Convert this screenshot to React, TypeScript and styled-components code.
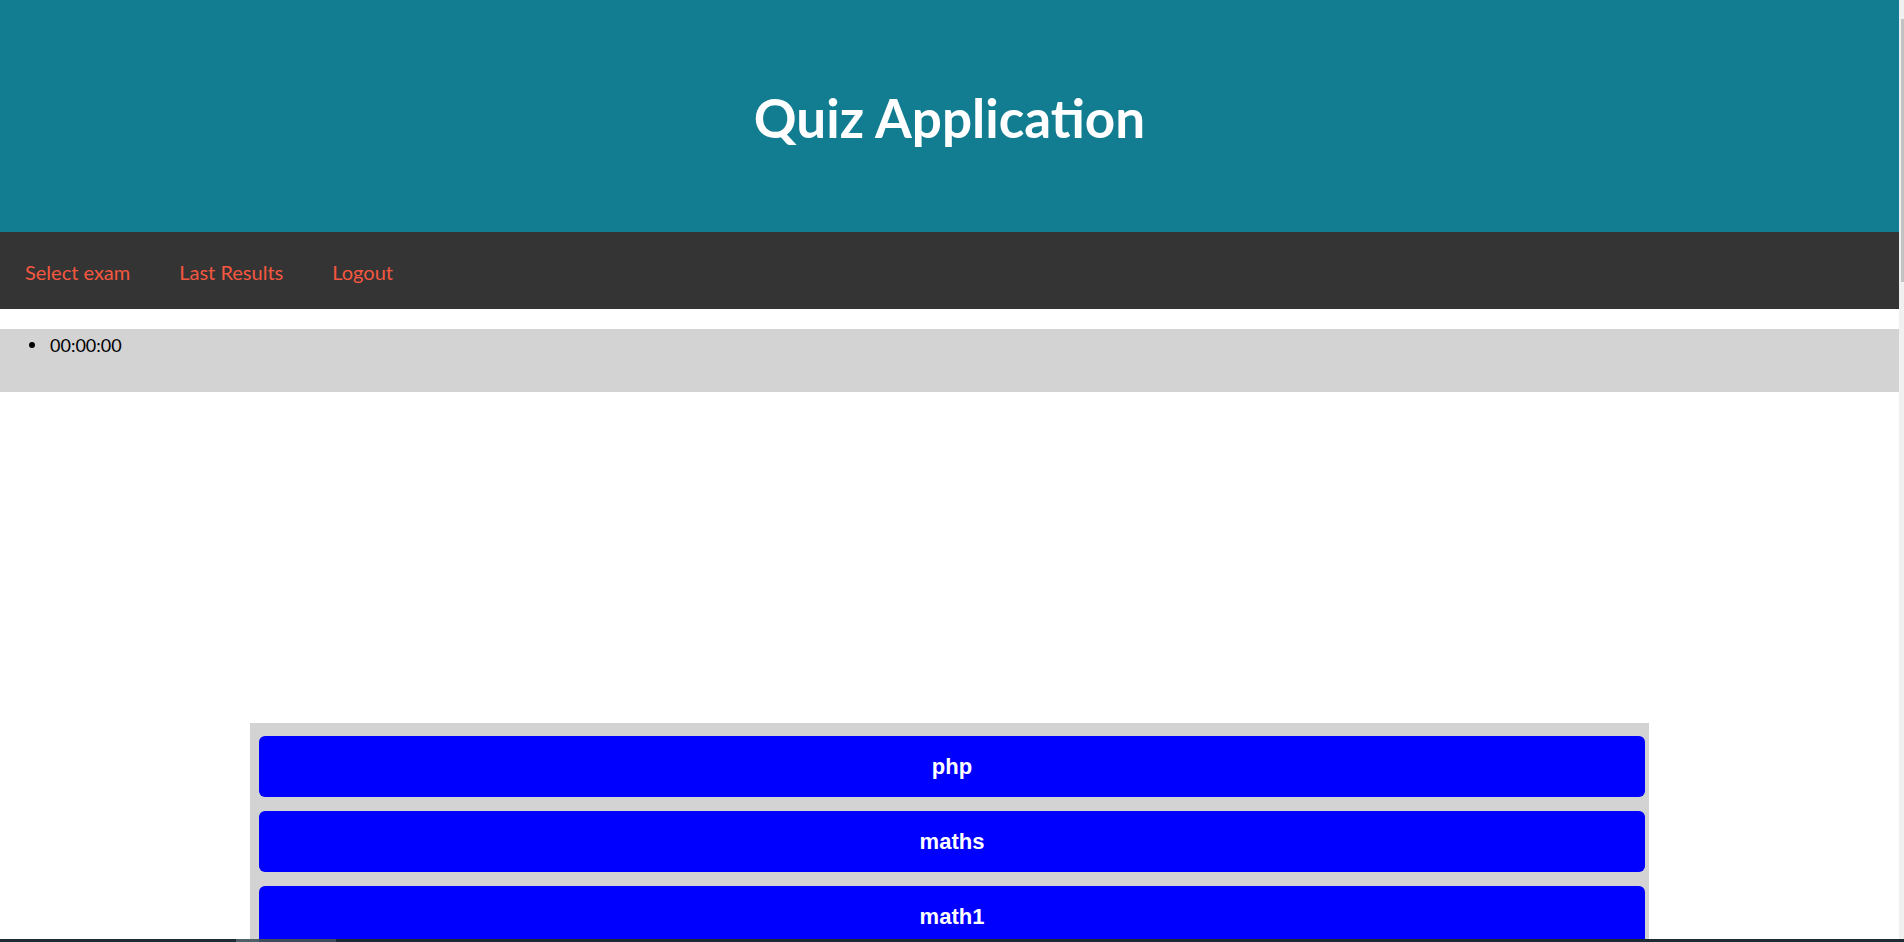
import React from "react";
import styled, { createGlobalStyle } from "styled-components";

const GlobalStyle = createGlobalStyle`
  html, body {
    margin: 0;
    padding: 0;
    height: 100%;
    overflow: hidden;
    background: #ffffff;
    font-family: "Lato", "Open Sans", sans-serif;
  }
  #root { height: 100%; }
`;

const Frame = styled.div`
  height: 100vh;
  display: flex;
  flex-direction: column;
  overflow: hidden;
`;

const Viewport = styled.div`
  flex: 1;
  min-height: 0;
  display: flex;
`;

const Page = styled.main`
  flex: 1;
  min-width: 0;
  overflow: hidden;
  background: #ffffff;
`;

const ScrollTrack = styled.div`
  width: 5px;
  flex: 0 0 5px;
  background: #f0f0f0;
  padding-top: 19px;
  box-sizing: border-box;
`;

const ScrollThumb = styled.div`
  width: 3px;
  height: 263px;
  margin-left: 2px;
  background: #c2c2c2;
`;

const Taskbar = styled.div`
  height: 3px;
  flex: 0 0 3px;
  background: #1f2b33;
  display: flex;
  padding-left: 236px;
`;

const TaskbarItem = styled.div<{ $w: number; $c: string }>`
  width: ${(p) => p.$w}px;
  background: ${(p) => p.$c};
`;

const Header = styled.header`
  height: 232px;
  background: #127c90;
  display: flex;
  align-items: center;
  justify-content: center;
  padding-top: 3px;
  box-sizing: border-box;
`;

const Title = styled.h1`
  margin: 0;
  color: #ffffff;
  font-family: "Lato", "Open Sans", sans-serif;
  font-weight: 700;
  font-size: 53px;
  line-height: 1;
`;

const Nav = styled.nav`
  height: 77px;
  background: #343434;
  display: flex;
  align-items: center;
  padding-top: 2px;
  box-sizing: border-box;
`;

const NavLink = styled.a`
  color: #f6573f;
  text-decoration: none;
  font-family: "Lato", "Open Sans", sans-serif;
  font-size: 20px;
  padding: 0 24.5px;
  &:first-child { padding-left: 25px; }
  cursor: pointer;
`;

const TimerBar = styled.section`
  margin-top: 20px;
  height: 63px;
  background: #d3d3d3;
`;

const TimerList = styled.ul`
  margin: 0;
  padding: 4px 0 0 29px;
  list-style: none;
`;

const TimerItem = styled.li`
  display: flex;
  align-items: center;
  color: #000000;
  font-family: "Lato", "Open Sans", sans-serif;
  font-size: 18px;
  line-height: 24px;
  &::before {
    content: "";
    width: 6px;
    height: 6px;
    border-radius: 50%;
    background: #000000;
    margin-right: 15px;
  }
`;

const ExamList = styled.section`
  margin: 331px auto 0;
  width: 1399px;
  background: #d3d3d3;
  box-sizing: border-box;
  padding: 13px 4px 13px 9px;
  display: flex;
  flex-direction: column;
  gap: 14px;
`;

const ExamButton = styled.button`
  height: 61px;
  width: 100%;
  border: none;
  border-radius: 6px;
  background: #0000ff;
  color: #ffffff;
  font-family: "Liberation Sans", Arial, sans-serif;
  font-weight: 700;
  font-size: 22px;
  padding: 0;
  cursor: pointer;
`;

const exams = ["php", "maths", "math1", "english", "science"];

export default function App() {
  return (
    <>
      <GlobalStyle />
      <Frame>
        <Viewport>
          <Page>
            <Header>
              <Title>Quiz Application</Title>
            </Header>
            <Nav>
              <NavLink>Select exam</NavLink>
              <NavLink>Last Results</NavLink>
              <NavLink>Logout</NavLink>
            </Nav>
            <TimerBar>
              <TimerList>
                <TimerItem>00:00:00</TimerItem>
              </TimerList>
            </TimerBar>
            <ExamList>
              {exams.map((e) => (
                <ExamButton key={e}>{e}</ExamButton>
              ))}
            </ExamList>
          </Page>
          <ScrollTrack>
            <ScrollThumb />
          </ScrollTrack>
        </Viewport>
        <Taskbar>
          <TaskbarItem $w={23} $c="#4f6068" />
          <TaskbarItem $w={77} $c="#3e4c5c" />
        </Taskbar>
      </Frame>
    </>
  );
}
